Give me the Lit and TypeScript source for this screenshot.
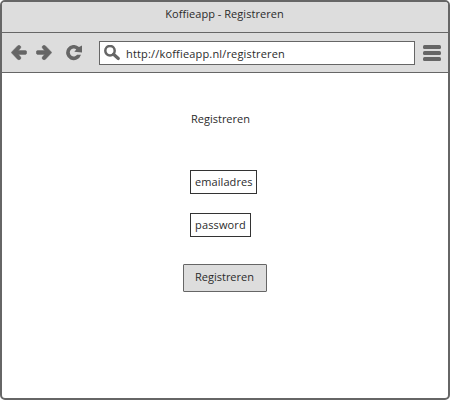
import { LitElement, html, css } from "lit";
import { customElement } from "lit/decorators.js";

@customElement("app-root")
export class AppRoot extends LitElement {
  static styles = css`
    :host {
      display: block;
      font: 11px/16px "Open Sans", "Noto Sans", sans-serif;
      color: #2b2b2b;
    }
    .window {
      box-sizing: border-box;
      width: 450px;
      height: 400px;
      border: 2px solid #666;
      border-radius: 5px;
      background: #fff;
      overflow: hidden;
      display: flex;
      flex-direction: column;
    }
    .title {
      height: 26px;
      padding: 4px 1px 0 0;
      background: #ddd;
      border-bottom: 1px solid #666;
      text-align: center;
      letter-spacing: 0.04px;
      white-space: nowrap;
    }
    .toolbar {
      display: flex;
      align-items: flex-start;
      height: 31px;
      padding: 8px 7px 0 9px;
      background: #ddd;
      border-bottom: 1px solid #666;
    }
    svg {
      display: block;
      flex: none;
      fill: #666;
    }
    .icon {
      margin-top: 4px;
    }
    .arrow {
      stroke: #666;
      stroke-width: 0.5;
      stroke-linejoin: round;
    }
    .forward {
      margin-left: 9px;
    }
    .reload {
      margin-left: 14px;
    }
    .address {
      box-sizing: border-box;
      width: 316px;
      height: 24px;
      margin-left: 16px;
      border: 1px solid #666;
      background: #fff;
      display: flex;
      padding: 3px 0 0 4px;
    }
    .url {
      margin: 1px 0 0 5px;
      letter-spacing: 0.17px;
      white-space: nowrap;
    }
    .menu {
      margin: 4px 0 0 8px;
    }
    .page {
      display: flex;
      flex-direction: column;
      align-items: flex-start;
      padding: 38px 0 0 188px;
    }
    .heading {
      margin-left: 1px;
    }
    .field {
      box-sizing: border-box;
      height: 24px;
      padding: 3px 0 0 4px;
      border: 1px solid #333;
      white-space: nowrap;
    }
    .email {
      margin-top: 43px;
      width: 67px;
      letter-spacing: 0.08px;
    }
    .password {
      margin-top: 19px;
      width: 61px;
      letter-spacing: 0.15px;
    }
    .button {
      box-sizing: border-box;
      width: 84px;
      height: 28px;
      margin: 27px 0 0 -7px;
      padding: 0 1px 2px 0;
      border: 1px solid #666;
      border-radius: 1px;
      background: #ddd;
      font: inherit;
      color: inherit;
      display: block;
      text-align: center;
    }
  `;

  render() {
    return html`
      <div class="window">
        <div class="title">Koffieapp - Registreren</div>
        <div class="toolbar">
          <svg class="icon arrow" width="16" height="16" viewBox="0 0 16 16">
            <path d="M.2 7.500 6.500.9Q8-.2 9.300.9 10.500 2 9.400 3.300L7.400 5.600H14.500Q15.800 5.700 15.800 7.500 15.800 9.300 14.500 9.400H7.400L9.400 11.700Q10.500 13 9.300 14.200 8 15.300 6.500 14.200Z" />
          </svg>
          <svg class="icon arrow forward" width="16" height="16" viewBox="0 0 16 16">
            <path d="M15.800 7.500 9.500.9Q8-.2 6.700.9 5.500 2 6.600 3.300L8.600 5.600H1.500Q.2 5.700 .2 7.500 .2 9.300 1.500 9.400H8.600L6.600 11.700Q5.500 13 6.700 14.200 8 15.300 9.500 14.200Z" />
          </svg>
          <svg class="icon reload" width="17" height="16" viewBox="0 0 17 16">
            <path d="M13 2.100 16 .6V7.500L8.300 6.700 10.300 4.400A4 4 0 1 0 11.100 9.800H15A7.600 7.600 0 1 1 13 2.100Z" />
          </svg>
          <div class="address">
            <svg width="17" height="16" viewBox="0 0 17 16">
              <circle cx="6" cy="5.700" r="4.700" fill="none" stroke="#666" stroke-width="2.500" />
              <path d="M9.500 9.300 14.300 13.500" stroke="#666" stroke-width="3.200" stroke-linecap="round" />
            </svg>
            <span class="url">http://koffieapp.nl/registreren</span>
          </div>
          <svg class="menu" width="18" height="16" viewBox="0 0 18 16">
            <rect width="18" height="4" rx="1.500" />
            <rect y="6" width="18" height="4" rx="1.500" />
            <rect y="12" width="18" height="4" rx="1.500" />
          </svg>
        </div>
        <div class="page">
          <div class="heading">Registreren</div>
          <div class="field email">emailadres</div>
          <div class="field password">password</div>
          <button class="button">Registreren</button>
        </div>
      </div>
    `;
  }
}
